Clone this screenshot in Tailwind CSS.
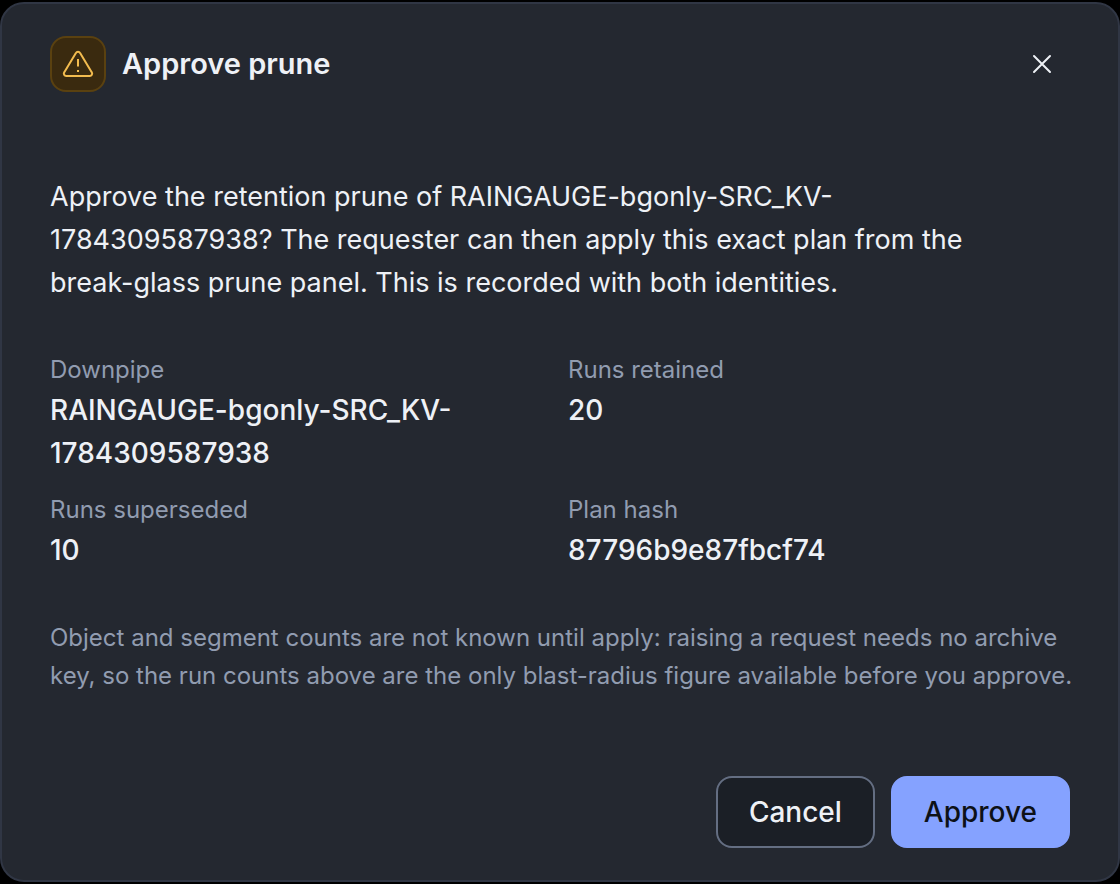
<!DOCTYPE html>
<html lang="en">
<head>
    <meta charset="UTF-8">
    <meta name="viewport" content="width=device-width, initial-scale=1.0">
    <title>Approve prune</title>
    <script src="https://cdn.jsdelivr.net/npm/@tailwindcss/browser@4"></script>
</head>
<body class="min-h-screen bg-black py-[2px] font-['Inter',sans-serif] text-[#eef1f6]">

<div role="dialog" aria-modal="true" aria-labelledby="dialog-title" class="w-full rounded-3xl border-2 border-[#303644] bg-[#242830] px-12 py-8">

    <header class="flex items-center gap-4">
        <span class="flex size-14 shrink-0 items-center justify-center rounded-2xl border-2 border-[#5a4110] bg-[#3a2a0f] text-[#f3bc4f]">
            <svg class="size-8" viewBox="0 0 32 32" fill="none" stroke="currentColor" stroke-width="2" stroke-linejoin="round" aria-hidden="true">
                <path d="M13.9 4.9 2.3 24.2a2.4 2.4 0 0 0 2.1 3.8h23.2a2.4 2.4 0 0 0 2.1-3.8L18.1 4.9a2.4 2.4 0 0 0-4.2 0z"/>
                <path d="M16 11v7.5M16 22v2"/>
            </svg>
        </span>
        <h2 id="dialog-title" class="flex-1 text-[29px] leading-10 font-semibold">Approve prune</h2>
        <button type="button" aria-label="Close" class="flex size-14 items-center justify-center rounded-xl">
            <svg class="size-6" viewBox="0 0 24 24" fill="none" stroke="currentColor" stroke-width="2" stroke-linecap="round" aria-hidden="true">
                <path d="M4 4l16 16M20 4L4 20"/>
            </svg>
        </button>
    </header>

    <div class="pt-[83px] pb-[81px] text-[28px] leading-[43px]">
        <p class="pr-8 text-[27px]">Approve the retention prune of RAINGAUGE-bgonly-SRC_KV-1784309587938? The requester can then apply this exact plan from the break-glass prune panel. This is recorded with both identities.</p>

        <dl class="mt-[47px] grid grid-cols-2 gap-4 font-medium">
            <div>
                <dt class="text-2xl leading-[38px] font-normal text-[#919cb0]">Downpipe</dt>
                <dd>RAINGAUGE-bgonly-SRC_KV-1784309587938</dd>
            </div>
            <div>
                <dt class="text-2xl leading-[38px] font-normal text-[#919cb0]">Runs retained</dt>
                <dd>20</dd>
            </div>
            <div>
                <dt class="text-2xl leading-[38px] font-normal text-[#919cb0]">Runs superseded</dt>
                <dd>10</dd>
            </div>
            <div>
                <dt class="text-2xl leading-[38px] font-normal text-[#919cb0]">Plan hash</dt>
                <dd>87796b9e87fbcf74</dd>
            </div>
        </dl>

        <p class="mt-[47px] -mr-4 text-2xl leading-[38px] text-[#919cb0]">Object and segment counts are not known until apply: raising a request needs no archive key, so the run counts above are the only blast-radius figure available before you approve.</p>
    </div>

    <footer class="flex justify-end gap-4 text-[28px] font-medium">
        <button type="button" class="h-[72px] rounded-2xl border-2 border-[#646e82] bg-[#1b1f26] px-[31px]">Cancel</button>
        <button type="button" class="h-[72px] rounded-2xl border-2 border-[#85a2ff] bg-[#85a2ff] px-[31px] text-[#0d1117]">Approve</button>
    </footer>
</div>

</body>
</html>
